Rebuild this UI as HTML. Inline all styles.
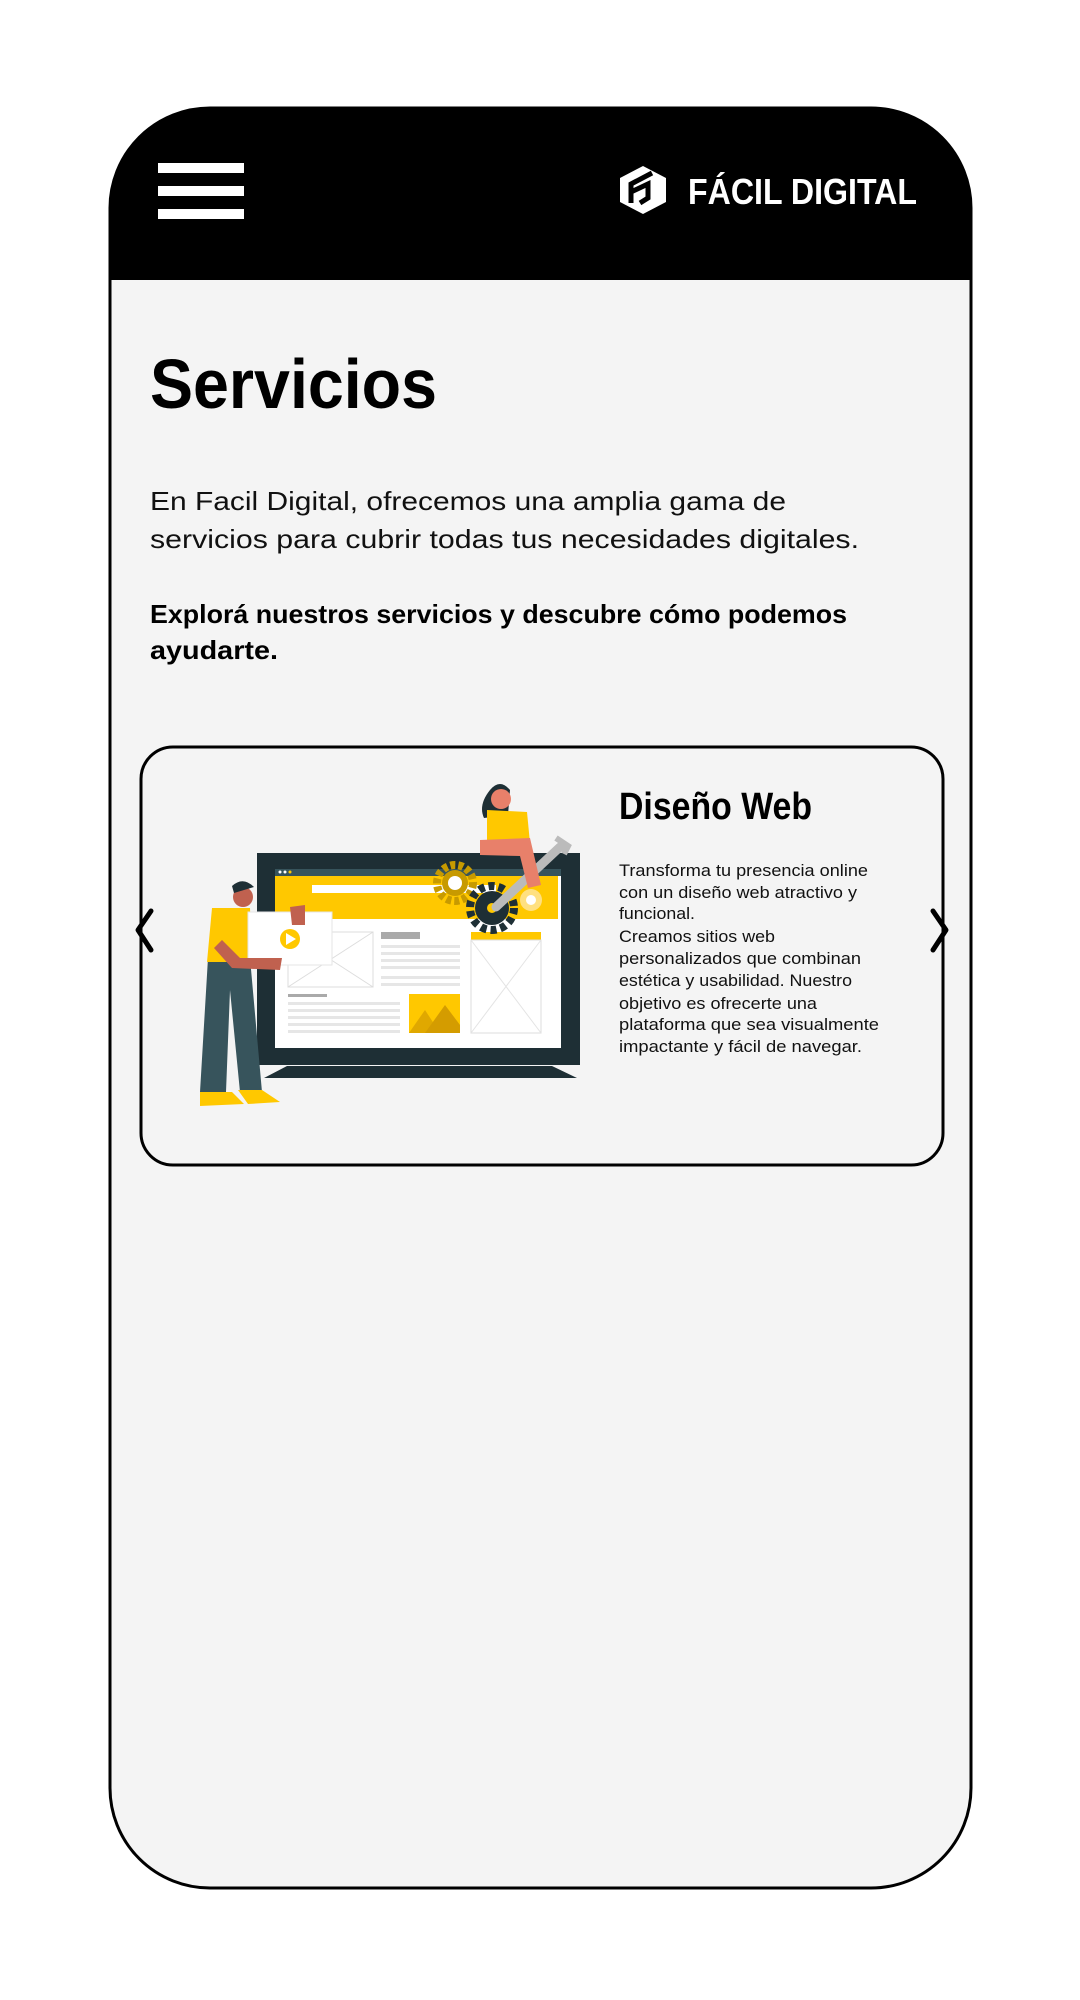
<!DOCTYPE html>
<html><head><meta charset="utf-8"><style>
html,body{margin:0;padding:0;background:#fff;width:1080px;height:2000px;overflow:hidden}
svg{display:block}
text{font-family:"Liberation Sans",sans-serif}
</style></head><body>
<svg width="1080" height="2000" viewBox="0 0 1080 2000" xmlns="http://www.w3.org/2000/svg">
<defs><clipPath id="fc"><rect x="110" y="108" width="861" height="1780" rx="100"/></clipPath></defs>
<rect x="110" y="108" width="861" height="1780" rx="100" fill="#f4f4f4"/>
<rect x="100" y="100" width="880" height="180" fill="#000" clip-path="url(#fc)"/>
<rect x="110" y="108" width="861" height="1780" rx="100" fill="none" stroke="#000" stroke-width="3"/>
<rect x="158" y="163" width="86" height="10" fill="#fff"/>
<rect x="158" y="186" width="86" height="10" fill="#fff"/>
<rect x="158" y="209" width="86" height="10" fill="#fff"/>
<polygon points="643,166 666,178 666,202 643,214 620,202 620,178" fill="#fff"/>
<path d="M631,203 L631,184 L652,173 M631,192 L648,184 L648,198 L640,203" stroke="#000" stroke-width="5" fill="none"/>
<text x="688" y="204" font-size="36" font-weight="bold" fill="#fff" textLength="229" lengthAdjust="spacingAndGlyphs">FÁCIL DIGITAL</text>
<text x="150" y="408" font-size="70" font-weight="bold" fill="#000" textLength="287" lengthAdjust="spacingAndGlyphs">Servicios</text>
<text x="150" y="510" font-size="26" fill="#111" textLength="636" lengthAdjust="spacingAndGlyphs">En Facil Digital, ofrecemos una amplia gama de</text>
<text x="150" y="548" font-size="26" fill="#111" textLength="709" lengthAdjust="spacingAndGlyphs">servicios para cubrir todas tus necesidades digitales.</text>
<text x="150" y="623" font-size="26" font-weight="bold" fill="#000" textLength="697" lengthAdjust="spacingAndGlyphs">Explorá nuestros servicios y descubre cómo podemos</text>
<text x="150" y="659" font-size="26" font-weight="bold" fill="#000" textLength="128" lengthAdjust="spacingAndGlyphs">ayudarte.</text>
<rect x="141" y="747" width="802" height="418" rx="32" fill="#f4f4f4" stroke="#000" stroke-width="3"/>
<polyline points="151,911 138,930 151,950" fill="none" stroke="#000" stroke-width="5" stroke-linecap="round" stroke-linejoin="round"/>
<polyline points="933,911 946,930 933,950" fill="none" stroke="#000" stroke-width="5" stroke-linecap="round" stroke-linejoin="round"/>
<text x="619" y="819" font-size="38" font-weight="bold" fill="#000" textLength="193" lengthAdjust="spacingAndGlyphs">Diseño Web</text>
<g font-size="16.5" fill="#111">
<text x="619" y="876" textLength="249" lengthAdjust="spacingAndGlyphs">Transforma tu presencia online</text>
<text x="619" y="898" textLength="238" lengthAdjust="spacingAndGlyphs">con un diseño web atractivo y</text>
<text x="619" y="919" textLength="76" lengthAdjust="spacingAndGlyphs">funcional.</text>
<text x="619" y="942" textLength="156" lengthAdjust="spacingAndGlyphs">Creamos sitios web</text>
<text x="619" y="964" textLength="242" lengthAdjust="spacingAndGlyphs">personalizados que combinan</text>
<text x="619" y="986" textLength="233" lengthAdjust="spacingAndGlyphs">estética y usabilidad. Nuestro</text>
<text x="619" y="1009" textLength="198" lengthAdjust="spacingAndGlyphs">objetivo es ofrecerte una</text>
<text x="619" y="1030" textLength="260" lengthAdjust="spacingAndGlyphs">plataforma que sea visualmente</text>
<text x="619" y="1052" textLength="243" lengthAdjust="spacingAndGlyphs">impactante y fácil de navegar.</text>
</g>
<polygon points="287,1066 552,1066 577,1078 264,1078" fill="#1e2f35"/>
<rect x="257" y="853" width="323" height="212" fill="#1e2f35"/>
<rect x="275" y="869" width="286" height="179" fill="#fff"/>
<rect x="275" y="869" width="286" height="7" fill="#37545c"/>
<circle cx="280" cy="872" r="1.5" fill="#fff"/><circle cx="285" cy="872" r="1.5" fill="#fff"/><circle cx="290" cy="872" r="1.5" fill="#ffc800"/>
<rect x="275" y="876" width="283" height="43" fill="#ffc800"/>
<rect x="312" y="885" width="184" height="8" fill="#fff"/>
<rect x="288" y="932" width="85" height="55" fill="#fff" stroke="#ddd"/>
<path d="M288,932 L373,987 M373,932 L288,987" stroke="#ddd"/>
<rect x="381" y="932" width="39" height="7" fill="#aaa"/>
<g fill="#e6e6e6"><rect x="381" y="945" width="79" height="3"/><rect x="381" y="952" width="79" height="3"/><rect x="381" y="959" width="79" height="3"/><rect x="381" y="966" width="79" height="3"/><rect x="381" y="976" width="79" height="3"/><rect x="381" y="983" width="79" height="3"/>
<rect x="288" y="1002" width="112" height="3"/><rect x="288" y="1009" width="112" height="3"/><rect x="288" y="1016" width="112" height="3"/><rect x="288" y="1023" width="112" height="3"/><rect x="288" y="1030" width="112" height="3"/></g>
<rect x="288" y="994" width="39" height="3" fill="#aaa"/>
<rect x="409" y="994" width="51" height="39" fill="#ffc800"/>
<polygon points="409,1033 425,1010 440,1033" fill="#e0a800"/><polygon points="425,1033 445,1005 460,1025 460,1033" fill="#d49c00"/>
<rect x="471" y="932" width="70" height="8" fill="#ffc800"/>
<rect x="471" y="940" width="70" height="93" fill="#fff" stroke="#ddd"/>
<path d="M471,940 L541,1033 M541,940 L471,1033" stroke="#e4e4e4"/>
<circle cx="455" cy="883" r="18" fill="none" stroke="#c79a00" stroke-width="8" stroke-dasharray="5 3"/>
<circle cx="455" cy="883" r="13" fill="#c79a00"/><circle cx="455" cy="883" r="7" fill="#fff"/>
<circle cx="492" cy="908" r="22" fill="none" stroke="#1e2f35" stroke-width="8" stroke-dasharray="6 4"/>
<circle cx="492" cy="908" r="17" fill="#1e2f35"/><circle cx="492" cy="908" r="5" fill="#ffc800"/>
<circle cx="531" cy="900" r="11" fill="#ffe080"/><circle cx="531" cy="900" r="5" fill="#fff"/>
<path d="M496,907 L560,847" stroke="#bbb" stroke-width="9" stroke-linecap="round"/>
<path d="M556,838 L568,846 L564,854" stroke="#bbb" stroke-width="6" fill="none"/>
<path d="M490,790 Q500,778 510,790 L508,815 L484,818 Q478,805 490,790Z" fill="#1e2f35"/>
<circle cx="501" cy="799" r="10" fill="#e8806a"/>
<path d="M487,810 L527,812 L530,843 L487,843Z" fill="#ffc800"/>
<path d="M480,840 L530,838 L541,885 L528,888 L520,856 L480,855Z" fill="#e8806a"/>
<path d="M208,958 L250,958 L262,1092 L240,1092 L230,990 L226,1092 L200,1092Z" fill="#37545c"/>
<path d="M212,908 L250,908 L252,962 L207,962Z" fill="#ffc800"/>
<circle cx="243" cy="897" r="10" fill="#c0614f"/>
<path d="M232,886 Q243,876 254,887 L234,893Z" fill="#1e2f35"/>
<path d="M200,1092 L232,1092 L244,1104 L200,1106Z" fill="#ffc800"/>
<path d="M238,1090 L262,1090 L280,1102 L248,1104Z" fill="#ffc800"/>
<rect x="248" y="912" width="84" height="53" fill="#fff" stroke="#e6e6e6"/>
<circle cx="290" cy="939" r="10" fill="#ffc800"/>
<polygon points="286,933 296,939 286,945" fill="#fff"/>
<path d="M290,907 L305,905 L305,925 L292,925Z" fill="#c0614f"/>
<path d="M222,940 L240,958 L282,958 L280,970 L232,968 L214,948Z" fill="#c0614f"/>
</svg>
</body></html>
